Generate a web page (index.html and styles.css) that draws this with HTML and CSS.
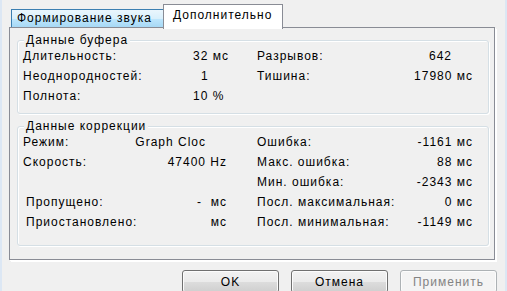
FILE: index.html
```html
<!DOCTYPE html>
<html lang="ru">
<head>
<meta charset="utf-8">
<link rel="stylesheet" href="styles.css">
</head>
<body>
<div class="dialog">
  <div class="tabs">
    <div class="tab tab-hot">Формирование звука</div>
    <div class="tab tab-active">Дополнительно</div>
  </div>
  <div class="panel">
    <div class="group group-buffer">
      <div class="group-title">Данные буфера</div>
      <div class="row">
        <div class="kv"><span>Длительность:</span><span class="val-left">32 мс</span></div>
        <div class="kv"><span>Разрывов:</span><span class="v642">642</span></div>
      </div>
      <div class="row">
        <div class="kv"><span>Неоднородностей:</span><span class="val-left one">1</span></div>
        <div class="kv"><span>Тишина:</span><span>17980 мс</span></div>
      </div>
      <div class="row">
        <div class="kv"><span>Полнота:</span><span class="val-left">10 %</span></div>
        <div class="kv"></div>
      </div>
    </div>
    <div class="group group-corr">
      <div class="group-title">Данные коррекции</div>
      <div class="row">
        <div class="kv"><span>Режим:</span><span class="mode">Graph Cloc</span></div>
        <div class="kv"><span>Ошибка:</span><span>-1161 мс</span></div>
      </div>
      <div class="row">
        <div class="kv"><span>Скорость:</span><span>47400 Hz</span></div>
        <div class="kv"><span>Макс. ошибка:</span><span>88 мс</span></div>
      </div>
      <div class="row">
        <div class="kv"></div>
        <div class="kv"><span>Мин. ошибка:</span><span>-2343 мс</span></div>
      </div>
      <div class="row">
        <div class="kv indent"><span>Пропущено:</span><span class="pre">-  мс</span></div>
        <div class="kv"><span>Посл. максимальная:</span><span>0 мс</span></div>
      </div>
      <div class="row">
        <div class="kv indent"><span>Приостановлено:</span><span>мс</span></div>
        <div class="kv"><span>Посл. минимальная:</span><span>-1149 мс</span></div>
      </div>
    </div>
  </div>
  <div class="buttons">
    <button class="btn">OK</button>
    <button class="btn">Отмена</button>
    <button class="btn btn-disabled">Применить</button>
  </div>
</div>
</body>
</html>
```

FILE: styles.css
```css
html, body {
  margin: 0;
  padding: 0;
  background: #f0f0f0;
}
body {
  font-family: "Liberation Sans", Arial, sans-serif;
  font-size: 12px;
  letter-spacing: 1px;
  color: #000;
}
.dialog {
  box-sizing: border-box;
  width: 507px;
  height: 291px;
  overflow: hidden;
  background: #f0f0f0;
  border-left: 2px solid #dce7f4;
  border-right: 2px solid #dce7f4;
}
.tabs {
  display: flex;
  align-items: flex-start;
  height: 27px;
  padding-left: 9px;
  position: relative;
  z-index: 2;
}
.tab {
  box-sizing: border-box;
  white-space: nowrap;
}
.tab-hot {
  margin-top: 9px;
  width: 154px;
  height: 18px;
  line-height: 17px;
  padding-left: 5px;
  border: 1px solid #3c7fb1;
  border-bottom: none;
  background: linear-gradient(#eaf6fd, #d9f0fc 50%, #bee6fd 51%, #a7d9f5);
}
.tab-active {
  margin-top: 4px;
  margin-left: -2px;
  width: 120px;
  height: 25px;
  line-height: 20px;
  padding-left: 9px;
  border: 1px solid #898c95;
  border-bottom: none;
  background: #fff;
}
.panel {
  box-sizing: border-box;
  margin-left: 7px;
  width: 486px;
  height: 233px;
  border: 1px solid #898c95;
  background: #f0f0f0;
  box-shadow: 1px 1px 0 #fff, 2px 2px 0 #fff;
  padding: 12px 5px 0 7px;
  position: relative;
  z-index: 1;
}
.group {
  position: relative;
  box-sizing: border-box;
  border: 1px solid #d5dfe5;
  border-radius: 3px;
  box-shadow: inset 1px 1px 0 #fff, 1px 1px 0 #fff;
  padding: 5px 0 0 5px;
}
.group-buffer {
  height: 74px;
}
.group-corr {
  margin-top: 12px;
  height: 120px;
}
.group-title {
  position: absolute;
  top: -8px;
  left: 6px;
  padding: 0 2px 0 2px;
  line-height: 15px;
  background: #f0f0f0;
}
.row {
  display: grid;
  grid-template-columns: 204px 216px;
  column-gap: 30px;
  height: 20px;
  line-height: 20px;
}
.kv {
  display: flex;
  justify-content: space-between;
  white-space: nowrap;
}
.val-left {
  width: 34px;
  text-align: left;
}
.one {
  padding-left: 8px;
  box-sizing: border-box;
}
.v642 {
  margin-right: 21px;
}
.mode {
  margin-right: 21px;
}
.indent {
  padding-left: 3px;
}
.pre {
  white-space: pre;
}
.buttons {
  display: flex;
  justify-content: flex-end;
  gap: 12px;
  margin-top: 10px;
  padding-right: 8px;
}
.btn {
  box-sizing: border-box;
  width: 97px;
  height: 23px;
  border: 1px solid #707070;
  border-radius: 3px;
  background: linear-gradient(#f2f2f2, #ebebeb 50%, #dddddd 51%, #cfcfcf);
  box-shadow: inset 0 0 0 1px #fcfcfc;
  font-family: inherit;
  font-size: 12px;
  letter-spacing: 1px;
  color: #000;
  padding: 0;
}
.btn-disabled {
  border-color: #adb2b5;
  background: #f4f4f4;
  color: #838383;
}
```
